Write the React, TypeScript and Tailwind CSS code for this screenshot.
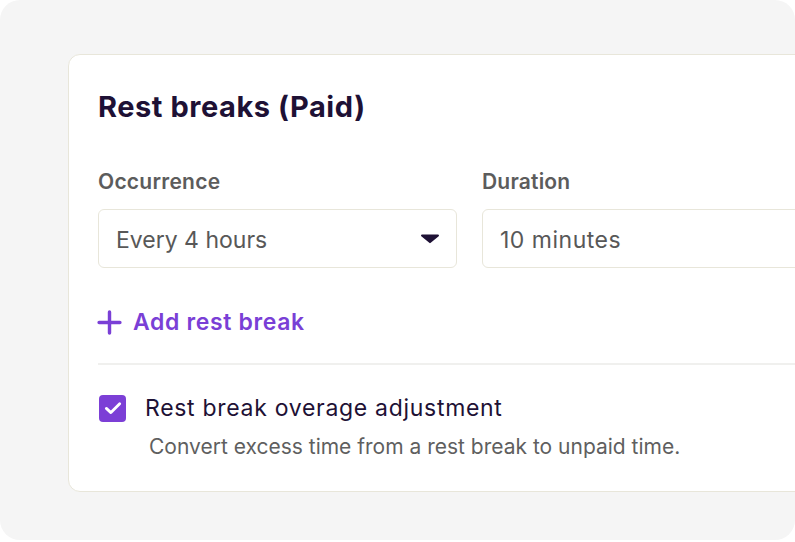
import React from "react";

export default function App() {
  return (
    <div className="w-[795px] h-[542px] bg-white" style={{ fontFamily: "Inter, 'Noto Sans', sans-serif" }}>
      <div className="w-[795px] h-[540px] rounded-[20px] bg-[#f5f5f5] overflow-hidden pl-[68px] pt-[54px]">
        <div className="w-[780px] h-[438px] bg-white border border-[#e8e6da] rounded-[12px] pl-[29px] pt-[34px]">
          <h1 className="text-[29px] leading-[36px] font-bold text-[#1e1135] tracking-[0.55px]">Rest breaks (Paid)</h1>
          <div className="flex gap-[25px] mt-[43px]">
            <div className="w-[359px] flex flex-col">
              <div className="text-[21px] leading-[28px] font-semibold text-[#5c5c5c] tracking-[0.25px]">Occurrence</div>
              <div className="mt-[13px] h-[59px] border border-[#e8e6da] rounded-[6px] flex items-center justify-between pl-[17px] pr-[16px]">
                <span className="text-[23px] leading-[30px] text-[#585858] mt-[3px]">Every 4 hours</span>
                <svg width="20" height="11" viewBox="0 0 20 11">
                  <path d="M2 1.5 H18 a1 1 0 0 1 0.7 1.7 L10.7 9.8 a1 1 0 0 1 -1.4 0 L1.3 3.2 A1 1 0 0 1 2 1.5 Z" fill="#1e1135" />
                </svg>
              </div>
            </div>
            <div className="w-[359px] flex flex-col">
              <div className="text-[21px] leading-[28px] font-semibold text-[#5c5c5c] tracking-[0.2px]">Duration</div>
              <div className="mt-[13px] h-[59px] border border-[#e8e6da] rounded-[6px] flex items-center pl-[17px]">
                <span className="text-[23px] leading-[30px] text-[#585858] tracking-[0.5px] mt-[3px]">10 minutes</span>
              </div>
            </div>
          </div>
          <div className="flex items-center mt-[39px] h-[30px]">
            <svg width="25" height="25" viewBox="0 0 24 24" className="ml-[-1px]">
              <path d="M12 2 V22 M2 12 H22" stroke="#7a3fd6" strokeWidth="3.3" strokeLinecap="round" />
            </svg>
            <span className="ml-[11px] text-[23px] font-semibold text-[#7a3fd6] tracking-[0.65px]">Add rest break</span>
          </div>
          <div className="mt-[26px] h-[2px] bg-[#f0f0ee]" />
          <div className="flex items-center mt-[28px]">
            <div className="w-[27px] h-[27px] rounded-[4px] bg-[#7c3fd6] flex items-center justify-center ml-[1px]">
              <svg width="20" height="20" viewBox="0 0 24 24">
                <path d="M4 12.5 L9.5 17.5 L20 7" stroke="white" strokeWidth="3.4" fill="none" strokeLinecap="round" strokeLinejoin="round" />
              </svg>
            </div>
            <span className="ml-[19px] text-[23px] leading-[30px] text-[#1e1135] tracking-[0.7px]">Rest break overage adjustment</span>
          </div>
          <div className="mt-[10px] ml-[51px] text-[21px] leading-[28px] text-[#5f5f5f]">
            Convert excess time from a rest break to unpaid time.
          </div>
        </div>
      </div>
    </div>
  );
}
